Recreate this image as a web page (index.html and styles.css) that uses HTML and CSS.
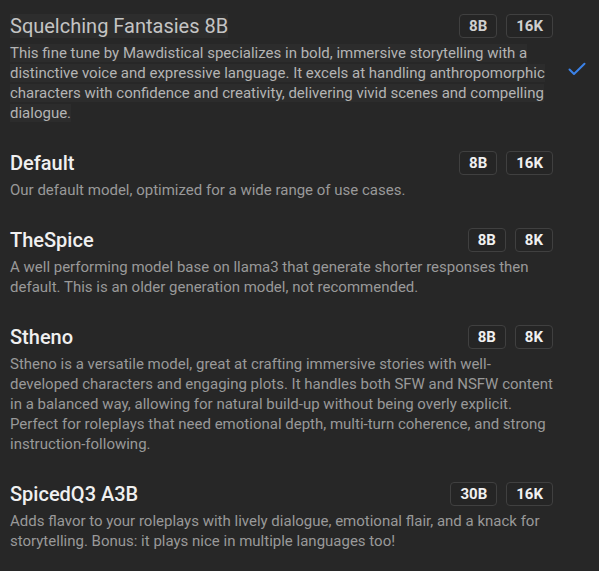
FILE: index.html
```html
<!DOCTYPE html>
<html lang="en">
<head>
<meta charset="utf-8">
<title>Models</title>
<link rel="stylesheet" href="styles.css">
</head>
<body>
<ul class="model-list">
  <li class="model selected">
    <div class="model-body">
      <div class="model-head">
        <span class="model-name">Squelching Fantasies 8B</span>
        <div class="tags"><span class="tag">8B</span><span class="tag">16K</span></div>
      </div>
      <p class="model-desc"><span>This fine tune by Mawdistical specializes in bold, immersive storytelling with a distinctive voice and expressive language. It excels at handling anthropomorphic characters with confidence and creativity, delivering vivid scenes and compelling dialogue.</span></p>
    </div>
    <div class="check">
      <svg viewBox="0 0 18 14" width="18" height="14"><path d="M1.5 7.5 L6 12 L16.5 1.8" fill="none" stroke="#3b82e8" stroke-width="2" stroke-linecap="round" stroke-linejoin="round"/></svg>
    </div>
  </li>
  <li class="model">
    <div class="model-body">
      <div class="model-head">
        <span class="model-name">Default</span>
        <div class="tags"><span class="tag">8B</span><span class="tag">16K</span></div>
      </div>
      <p class="model-desc">Our default model, optimized for a wide range of use cases.</p>
    </div>
    <div class="check"></div>
  </li>
  <li class="model">
    <div class="model-body">
      <div class="model-head">
        <span class="model-name">TheSpice</span>
        <div class="tags"><span class="tag">8B</span><span class="tag">8K</span></div>
      </div>
      <p class="model-desc">A well performing model base on llama3 that generate shorter responses then default. This is an older generation model, not recommended.</p>
    </div>
    <div class="check"></div>
  </li>
  <li class="model">
    <div class="model-body">
      <div class="model-head">
        <span class="model-name">Stheno</span>
        <div class="tags"><span class="tag">8B</span><span class="tag">8K</span></div>
      </div>
      <p class="model-desc">Stheno is a versatile model, great at crafting immersive stories with well-developed characters and engaging plots. It handles both SFW and NSFW content in a balanced way, allowing for natural build-up without being overly explicit. Perfect for roleplays that need emotional depth, multi-turn coherence, and strong instruction-following.</p>
    </div>
    <div class="check"></div>
  </li>
  <li class="model">
    <div class="model-body">
      <div class="model-head">
        <span class="model-name">SpicedQ3 A3B</span>
        <div class="tags"><span class="tag">30B</span><span class="tag">16K</span></div>
      </div>
      <p class="model-desc">Adds flavor to your roleplays with lively dialogue, emotional flair, and a knack for storytelling. Bonus: it plays nice in multiple languages too!</p>
    </div>
    <div class="check"></div>
  </li>
</ul>
</body>
</html>
```

FILE: styles.css
```css
html, body {
  margin: 0;
  padding: 0;
  background: #272727;
  font-family: Roboto, "Liberation Sans", sans-serif;
  height: 100%;
  overflow: hidden;
}

.model-list {
  list-style: none;
  margin: 0;
  padding: 0;
}

.model {
  display: flex;
  align-items: center;
  padding: 14px 10px;
}

.model-body {
  flex: 1;
  min-width: 0;
}

.model-head {
  display: flex;
  align-items: center;
  justify-content: space-between;
  margin-bottom: 5px;
}

.model-name {
  font-size: 20px;
  line-height: 24px;
  font-weight: 500;
  color: #f0f0f0;
}

.tags {
  display: flex;
  gap: 9px;
}

.tag {
  display: inline-flex;
  align-items: center;
  height: 22px;
  padding: 0 9px;
  border: 1px solid #404040;
  border-radius: 4px;
  font-size: 15px;
  font-weight: 700;
  color: #f0f0f0;
  background: #252525;
}

.model-desc {
  margin: 0;
  font-size: 15px;
  line-height: 20px;
  color: #999999;
}

.check {
  width: 24px;
  margin-left: 12px;
  display: flex;
  justify-content: center;
}

.selected .model-name {
  font-weight: 400;
  color: #c4c4c4;
  background: #2d2d2d;
}

.selected .model-desc span {
  color: #b4b4b4;
  background: #2c2c2c;
}

.selected .tag {
  color: #cfcfcf;
}
```
